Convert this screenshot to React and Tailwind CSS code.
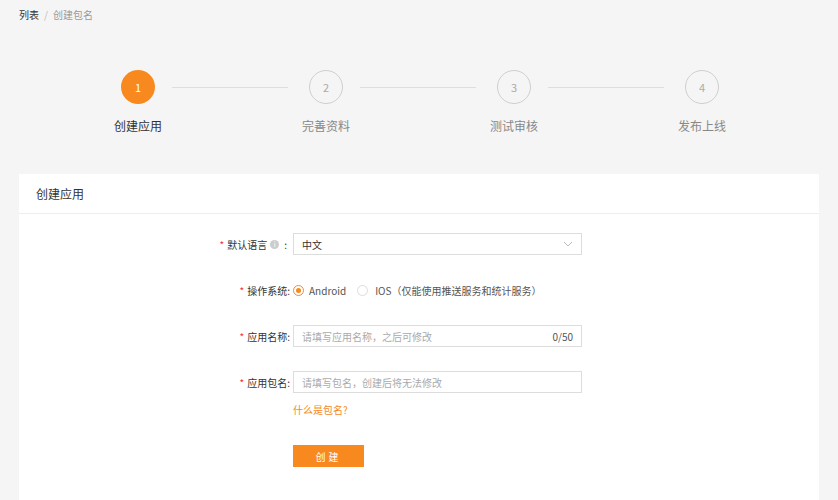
export default function App() {
  const steps = ["创建应用", "完善资料", "测试审核", "发布上线"];
  const font = { fontFamily: '"Noto Sans CJK SC","Noto Sans",sans-serif' };
  return (
    <div className="w-[838px] h-[500px] overflow-hidden bg-[#f5f5f5] text-[12px] text-[#333]" style={font}>
      <div className="pt-[7px] pl-[19px] text-[10px] leading-[16px]">
        <span className="text-[#333]">列表</span>
        <span className="text-[#bbb] mx-[5px]">/</span>
        <span className="text-[#999]">创建包名</span>
      </div>
      <div className="mt-[47px] flex items-center pl-[121px]">
        {steps.map((s, i) => (
          <div key={i} className="flex items-center">
            <div className={i === 0 ? "w-[34px] h-[34px] rounded-full bg-[#f7891f] text-white flex items-center justify-center text-[11px]" : "w-[34px] h-[34px] rounded-full border border-[#cfcfcf] text-[#aaa] flex items-center justify-center text-[11px]"}>{i + 1}</div>
            {i < 3 && <div className="ml-[17px] mr-[21px] w-[116px] h-px bg-[#dedede]" />}
          </div>
        ))}
      </div>
      <div className="flex pl-[44px] mt-[13px]">
        {steps.map((s, i) => (
          <div key={i} className={"w-[188px] text-center text-[12px] leading-[18px] " + (i === 0 ? "text-[#333]" : "text-[#888]")}>{s}</div>
        ))}
      </div>
      <div className="mt-[39px] mx-[19px] bg-white h-[400px]">
        <div className="h-[40px] border-b border-[#eee] flex items-center pl-[17px] text-[12px] text-[#333]">创建应用</div>
        <div className="pt-[19px] flex flex-col">
          <Row label="默认语言" info>
            <div className="w-[289px] h-[22px] border border-[#ddd] flex items-center justify-between px-[8px] text-[10px] text-[#333]">
              <span>中文</span>
              <svg width="10" height="6" viewBox="0 0 10 6"><path d="M1 1l4 4 4-4" stroke="#bbb" fill="none" /></svg>
            </div>
          </Row>
          <Row label="操作系统" mt="mt-[24px]">
            <div className="h-[22px] flex items-center text-[10px] text-[#555]">
              <span className="w-[11px] h-[11px] rounded-full border border-[#f7891f] flex items-center justify-center"><span className="w-[5px] h-[5px] rounded-full bg-[#f7891f]" /></span>
              <span className="ml-[5px]">Android</span>
              <span className="ml-[11px] w-[11px] h-[11px] rounded-full border border-[#ddd]" />
              <span className="ml-[7px]">IOS（仅能使用推送服务和统计服务）</span>
            </div>
          </Row>
          <Row label="应用名称" mt="mt-[24px]">
            <div className="w-[289px] h-[22px] border border-[#ddd] flex items-center justify-between px-[8px] text-[10px]">
              <span className="text-[#aaa]">请填写应用名称，之后可修改</span>
              <span className="text-[#555]">0/50</span>
            </div>
          </Row>
          <Row label="应用包名" mt="mt-[24px]">
            <div className="w-[289px] h-[22px] border border-[#ddd] flex items-center px-[8px] text-[10px] text-[#aaa]">请填写包名，创建后将无法修改</div>
          </Row>
          <div className="ml-[274px] mt-[10px] text-[10px] text-[#f7891f] leading-[14px]">什么是包名?</div>
          <div className="ml-[274px] mt-[28px] w-[71px] h-[22px] bg-[#f7891f] text-white text-[10px] flex items-center justify-center tracking-[3px]">创建</div>
        </div>
      </div>
    </div>
  );
}

function Row({ label, info, children, mt = "" }) {
  return (
    <div className={"flex items-center " + mt}>
      <div className="w-[274px] pr-[3px] flex items-center justify-end text-[10px] text-[#333]">
        <span className="text-[#e33] mr-[3px]">*</span>
        <span>{label}</span>
        {info ? (
          <>
            <span className="ml-[3px] w-[9px] h-[9px] rounded-full bg-[#ccc] text-white text-[7px] flex items-center justify-center leading-none">i</span>
            <span className="ml-[5px] mr-[3px]">:</span>
          </>
        ) : <span>:</span>}
      </div>
      {children}
    </div>
  );
}
